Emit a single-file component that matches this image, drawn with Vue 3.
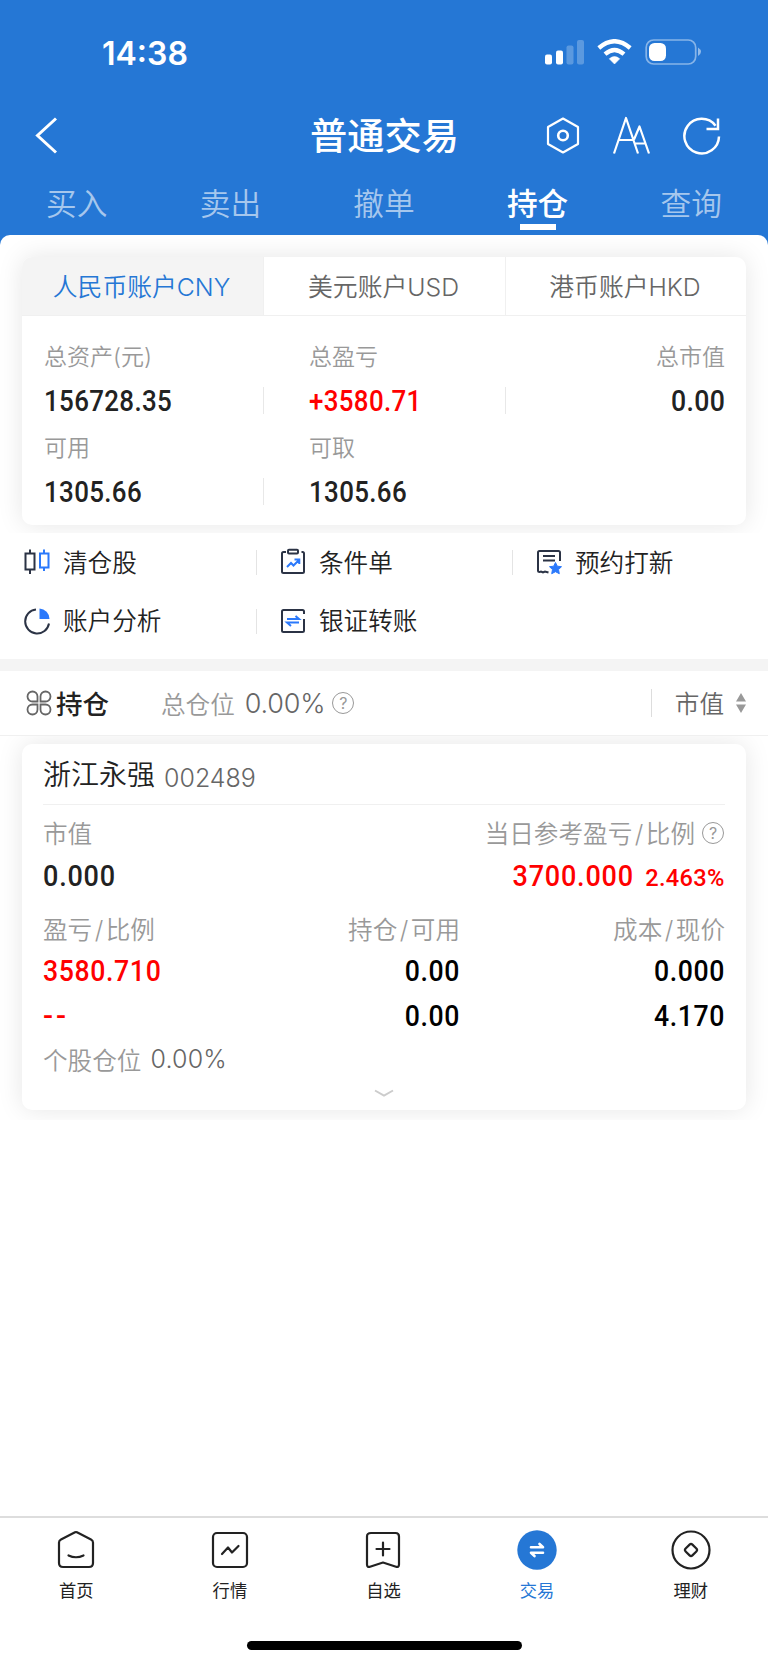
<script setup>
const tradeTabs = ['买入', '卖出', '撤单', '持仓', '查询']
const accounts = ['人民币账户CNY', '美元账户USD', '港币账户HKD']
const summary = [
  { label: '总资产(元)', value: '156728.35', split: true },
  { label: '总盈亏', value: '+3580.71', up: true, split: true },
  { label: '总市值', value: '0.00', end: true },
  { label: '可用', value: '1305.66', split: true },
  { label: '可取', value: '1305.66' },
]
const tools = [
  { name: '清仓股', icon: 'candles', split: true },
  { name: '条件单', icon: 'clipboard', split: true },
  { name: '预约打新', icon: 'note' },
  { name: '账户分析', icon: 'pie', split: true },
  { name: '银证转账', icon: 'transfer' },
]
const nav = [
  { name: '首页', icon: 'home' },
  { name: '行情', icon: 'chart' },
  { name: '自选', icon: 'mark' },
  { name: '交易', icon: 'trade' },
  { name: '理财', icon: 'wealth' },
]
</script>

<template>
  <div class="app">
    <header class="top">
      <div class="status">
        <span class="clock">14:38</span>
        <svg class="signals" width="160" height="30" viewBox="0 0 160 30">
          <g fill="#fff">
            <rect x="1" y="15.500" width="7" height="10" rx="2" />
            <rect x="12" y="11.500" width="7" height="14" rx="2" />
            <rect x="22.500" y="6.500" width="7" height="19" rx="2" opacity=".25" />
            <rect x="33" y="1" width="7" height="24.500" rx="2" opacity=".25" />
            <path d="M70.500 25 65.300 19.800Q70.500 15.400 75.700 19.800Z" stroke="#fff" stroke-width=".6" stroke-linejoin="round" />
          </g>
          <g fill="none" stroke="#fff" stroke-width="4.300">
            <path d="M54.800 9Q70.500 -4.600 86.200 9" />
            <path d="M61 15.200Q70.500 6.800 80 15.200" />
          </g>
          <rect x="102.200" y="1" width="49.500" height="24" rx="7.500" fill="none" stroke="#fff" stroke-opacity=".45" stroke-width="1.700" />
          <rect x="105" y="4" width="17" height="18" rx="5.500" fill="#fff" />
          <path d="M154 8.500Q157 10.500 157 12.700T154 17Z" fill="#fff" opacity=".5" />
        </svg>
      </div>
      <div class="titlebar">
        <svg class="back" width="24" height="38" viewBox="0 0 24 38" fill="none" stroke="#fff" stroke-width="3"><path d="M21 1.500 2.500 18.500 21 35.500" /></svg>
        <h1>普通交易</h1>
        <div class="actions">
          <svg width="36" height="40" viewBox="0 0 36 40" fill="none" stroke="#fff" stroke-width="2.200">
            <path d="M18 2.500 33 11V28L18 36.500 3 28V11Z" stroke-linejoin="round" />
            <circle cx="18" cy="19.500" r="4.800" stroke-width="2.600" />
          </svg>
          <svg width="40" height="40" viewBox="0 0 40 40" fill="none" stroke="#fff" stroke-width="2.200" stroke-linejoin="round">
            <path d="M2 37.500 14 2 26 37.500M6.500 24H22M22 23.500 27.500 10.500 37 37.500M22.500 27.500H33.500" />
          </svg>
          <svg width="40" height="40" viewBox="0 0 40 40" fill="none" stroke="#fff" stroke-width="2.500"><path d="M37 20.500A17.300 17.300 0 1 1 33.500 9.700M36 2.500V13H24.500" /></svg>
        </div>
      </div>
      <nav class="trade-tabs">
        <span v-for="(t, i) in tradeTabs" :key="t" :class="{ active: i === 3 }">{{ t }}</span>
      </nav>
    </header>

    <section class="sheet">
      <div class="card account">
        <div class="account-tabs">
          <span v-for="(a, i) in accounts" :key="a" :class="{ active: i === 0 }">{{ a }}</span>
        </div>
        <div class="summary">
          <div v-for="s in summary" :key="s.label" class="cell" :class="{ split: s.split, end: s.end }">
            <span class="label">{{ s.label }}</span>
            <span class="num" :class="{ up: s.up }">{{ s.value }}</span>
          </div>
        </div>
      </div>
    </section>

    <section class="tools">
      <div v-for="t in tools" :key="t.name" class="tool" :class="{ split: t.split }">
        <svg width="28" height="28" viewBox="0 0 28 28" fill="none" stroke="#2b3345" stroke-width="2">
          <template v-if="t.icon === 'candles'">
            <path d="M2.500 5.500H11.500V21.500H2.500ZM7 1.500V5.500M7 21.500V26" />
            <path d="M17 5.500H25.500V19.500H17ZM21 1.500V5.500M21 19.500V23" stroke="#2b79fb" />
          </template>
          <template v-else-if="t.icon === 'clipboard'">
            <path d="M7 4H4.500Q3 4 3 5.500V23.500Q3 25 4.500 25H23.500Q25 25 25 23.500V5.500Q25 4 23.500 4H22.500" />
            <rect x="9" y="1.800" width="10" height="3.700" rx="1" />
            <path d="M8 19 12 15 14.500 17.500 20 12M15.500 11.500H20.300V16" stroke="#2b79fb" />
          </template>
          <template v-else-if="t.icon === 'note'">
            <path d="M25 13V4.500Q25 3 23.500 3H4.500Q3 3 3 4.500V23Q3 24 4.500 24L6 23.500 8 24.500 10 23.500 13.500 24.500M8 8H20M8 12.500H20" />
            <path d="M20.500 14.500 22.300 18.200 26.500 18.700 23.500 21.600 24.300 25.700 20.500 23.700 16.700 25.700 17.500 21.600 14.500 18.700 18.700 18.200Z" fill="#2b79fb" stroke="#2b79fb" stroke-width="1" />
          </template>
          <template v-else-if="t.icon === 'pie'">
            <path d="M13 2.500A12 12 0 1 0 26 16.500" />
            <path d="M16.500 1.500A10.500 10.500 0 0 1 26.500 12H16.500Z" fill="#2b79fb" stroke="none" />
          </template>
          <template v-else>
            <path d="M25 7V4.500Q25 3 23.500 3H4.500Q3 3 3 4.500V23.500Q3 25 4.500 25H23.500Q25 25 25 23.500V12" />
            <path d="M8 12H20L16.500 9M20 15.500H8L12 19" stroke="#2b79fb" />
          </template>
        </svg>
        <span>{{ t.name }}</span>
      </div>
    </section>

    <section class="holdings">
      <header class="hold-head">
        <svg class="clover" width="26" height="26" viewBox="0 0 26 26" fill="none" stroke="#666" stroke-width="1.800">
          <path d="M11.500 11.500H6.500A5 5 0 1 1 11.500 6.500ZM14.500 11.500H19.500A5 5 0 1 0 14.500 6.500ZM11.500 14.500H6.500A5 5 0 1 0 11.500 19.500ZM14.500 14.500H19.500A5 5 0 1 1 14.500 19.500Z" />
        </svg>
        <h2>持仓</h2>
        <span class="total">总仓位</span>
        <span class="percent">0.00%</span>
        <i class="help">?</i>
        <div class="sort">
          <span>市值</span>
          <svg width="10" height="20" viewBox="0 0 10 20" fill="#999"><path d="M5 0 10 8.500H0ZM0 11.500H10L5 20Z" /></svg>
        </div>
      </header>

      <div class="stage">
        <article class="card stock">
          <div class="stock-name"><span>浙江永强</span><span class="code">002489</span></div>
          <div class="row">
            <span class="label">市值</span>
            <span class="label push"><span>当日参考盈亏<b>/</b>比例</span><i class="help">?</i></span>
          </div>
          <div class="row values">
            <span class="num">0.000</span>
            <span class="num up push">3700.000</span>
            <span class="num up small">2.463%</span>
          </div>
          <div class="trio labels">
            <span>盈亏<b>/</b>比例</span><span>持仓<b>/</b>可用</span><span>成本<b>/</b>现价</span>
          </div>
          <div class="trio">
            <span class="num up">3580.710</span><span class="num">0.00</span><span class="num">0.000</span>
          </div>
          <div class="trio">
            <span class="num up dash">--</span><span class="num">0.00</span><span class="num">4.170</span>
          </div>
          <div class="ratio"><span>个股仓位</span><span class="figure">0.00%</span></div>
          <svg class="more" width="20" height="9" viewBox="0 0 20 9" fill="none" stroke="#ccc" stroke-width="2"><path d="M1 1.500 10 6.500 19 1.500" /></svg>
        </article>
      </div>
    </section>

    <footer class="bottom">
      <nav class="nav">
        <div v-for="n in nav" :key="n.name" class="nav-item" :class="{ active: n.icon === 'trade' }">
          <svg width="40" height="40" viewBox="0 0 40 40" fill="none" stroke="#222" stroke-width="2.200" stroke-linecap="round" stroke-linejoin="round">
            <template v-if="n.icon === 'home'">
              <path d="M19 2.300Q20 1.800 21 2.300L35 9.500Q37 10.500 37 12.500V33Q37 37 33 37H7Q3 37 3 33V12.500Q3 10.500 5 9.500Z" /><path d="M12.500 25.500Q20 29 27.500 25.500" />
            </template>
            <template v-else-if="n.icon === 'chart'">
              <rect x="3" y="3" width="34" height="34" rx="4" /><path d="M12 24 18 17.500 22 22.500 28.500 16" />
            </template>
            <template v-else-if="n.icon === 'mark'">
              <path d="M8 3H32.500Q36 3 36 6.500V34.500Q36 37.500 33 36.700L20 32.500 7 36.700Q4 37.500 4 34.500V6.500Q4 3 8 3Z" /><path d="M20 12.500V25.500M13.500 19H26.500" />
            </template>
            <template v-else-if="n.icon === 'trade'">
              <circle cx="20" cy="20" r="19.700" fill="#2577d5" stroke="none" />
              <path d="M14 17.300H26L22.500 14M26 22.800H14L17.500 26" stroke="#fff" stroke-width="2.600" />
            </template>
            <template v-else>
              <circle cx="20" cy="20" r="18.500" /><rect x="15.200" y="15.200" width="9.600" height="9.600" rx="2" transform="rotate(45 20 20)" />
            </template>
          </svg>
          <span>{{ n.name }}</span>
        </div>
      </nav>
      <div class="indicator"></div>
    </footer>
  </div>
</template>

<style>
body { margin: 0; background: #fff; }
</style>

<style scoped>
* { box-sizing: border-box; }
svg { display: block; flex: none; }
h1, h2 { margin: 0; font-weight: 500; }
.app { width: 768px; height: 1665px; display: flex; flex-direction: column; background: #fff; color: #222; font-family: Inter, "Noto Sans CJK SC", sans-serif; font-size: 24.600px; font-weight: 350; overflow: hidden; white-space: nowrap; }
.top { height: 235px; background: #2577d5; color: #fff; }
.status { height: 100px; padding: 39px 64px 0 102px; display: flex; justify-content: space-between; align-items: flex-start; }
.clock { font-size: 32px; line-height: 29px; font-weight: 600; }
.titlebar { height: 72px; padding: 0 46px 0 35px; display: grid; grid-template-columns: 200px 1fr 200px; align-items: center; }
h1 { font-size: 37.200px; line-height: 70px; text-align: center; padding: 2px 0 0 12px; }
.actions { display: flex; align-items: center; justify-content: flex-end; gap: 30px; }
.actions svg + svg { margin-left: 1.500px; }
.actions svg:last-child { margin-left: 0; }
.trade-tabs { display: grid; grid-template-columns: repeat(5, 1fr); height: 63px; font-size: 30.700px; line-height: 64px; text-align: center; }
.trade-tabs span { color: rgba(255, 255, 255, .6); position: relative; }
.trade-tabs .active { color: #fff; font-weight: 500; }
.trade-tabs .active::after { content: ""; position: absolute; left: calc(50% - 18px); top: 52px; width: 36px; height: 6px; background: #fff; }
.sheet { height: 298px; padding: 22px; background: linear-gradient(#2577d5 12px, #fff 12px); position: relative; overflow: hidden; }
.sheet::before { content: ""; position: absolute; inset: 0; background: #fff; border-radius: 10px 10px 0 0; }
.card { position: relative; background: #fff; border-radius: 10px; box-shadow: 0 0 26px rgba(0, 0, 0, .1); }
.account { height: 268px; }
.account-tabs { display: grid; grid-template-columns: 241px 242px 241px; height: 59px; border-bottom: 1px solid #f0f0f0; line-height: 60px; text-align: center; color: #666; border-radius: 10px 10px 0 0; overflow: hidden; font-size: 24.800px; }
.account-tabs span { padding-right: 2px; }
.account-tabs span + span { border-left: 1px solid #f0f0f0; }
.account-tabs .active { color: #2577d5; background: #f4f4f4; }
.summary { display: grid; grid-template-columns: 242px 242px 240px; grid-auto-rows: 91px; padding-top: 19px; }
.cell { position: relative; padding-left: 22px; display: flex; flex-direction: column; align-items: flex-start; }
.cell:nth-child(3n + 2) { padding-left: 45px; }
.cell.end { align-items: flex-end; padding: 0 21px 0 0; }
.cell .label { font-size: 23px; line-height: 45px; height: 44px; }
.cell.split::after { content: ""; position: absolute; right: 0; top: 52px; width: 1px; height: 27px; background: #e8e8e8; }
.label { color: #999; }
.num { font-family: Roboto, sans-serif; font-size: 29.600px; line-height: 44px; font-weight: 500; letter-spacing: .4px; transform: scaleX(.9); transform-origin: left center; }
.cell .num { transform: scaleX(.875); }
.cell.end .num { transform: scaleX(.9); }
.end .num, .push, .num.small, .trio .num:nth-child(n + 2) { transform-origin: right center; }
.up { color: #f00; }
.tools { height: 126px; display: grid; grid-template-columns: repeat(3, 256px); grid-auto-rows: 58.500px; }
.tool { display: flex; align-items: center; padding-left: 23px; gap: 12px; position: relative; }
.tool span { padding-bottom: 3px; }
.tool.split::after { content: ""; position: absolute; right: -1px; top: 17px; width: 1px; height: 25px; background: #e4e4e4; }
.holdings { border-top: 12px solid #f4f4f4; }
.hold-head { height: 65px; border-bottom: 1px solid #f0f0f0; display: flex; align-items: center; padding: 0 22px 0 26px; }
h2 { font-size: 26.500px; margin-left: 4px; padding-bottom: 2px; }
.total { color: #999; margin-left: 52px; padding-bottom: 1px; }
.percent { font-size: 27px; color: #666; margin-left: 10px; letter-spacing: -.2px; }
.help { display: inline-block; width: 22px; height: 22px; border: 1.500px solid #999; border-radius: 50%; font: 400 16px/20px Inter, sans-serif; text-align: center; color: #999; }
.percent + .help { margin-left: 7px; }
.sort { display: flex; align-items: center; margin-left: auto; height: 28px; border-left: 1px solid #ddd; padding-left: 23px; gap: 12px; color: #666; }
.sort span { padding-bottom: 2px; }
.stage { height: 384px; padding: 8px 22px; overflow: hidden; }
.stock { height: 366px; padding: 0 21px 0 21px; }
.stock-name { height: 61px; display: flex; align-items: baseline; border-bottom: 1px solid #f0f0f0; font-size: 28px; line-height: 63px; }
.code { font-size: 25px; color: #666; margin-left: 9px; position: relative; top: 2px; }
b { font-weight: inherit; margin: 0 2.500px; }
.row { display: flex; height: 56px; align-items: center; }
.row .label { line-height: 58px; padding-top: 2px; display: flex; align-items: center; gap: 7px; }
.row .help { margin-bottom: 2px; margin-right: 1px; }
.push { margin-left: auto; }
.row.values { height: 31px; }
.row.values .num { font-size: 30px; letter-spacing: .9px; line-height: 30px; padding-bottom: 2px; }
.row.values .num.small { font-size: 24.600px; letter-spacing: .3px; margin-left: 8.500px; padding: 3px 0 0; transform: scaleX(.96); }
.trio { display: grid; grid-template-columns: 180px 237px 265px; text-align: right; align-items: center; height: 45px; color: #000; }
.trio span:first-child { text-align: left; }
.trio.labels { height: 57px; padding-top: 15px; color: #999; }
.trio.labels span { line-height: 50px; margin-top: -2px; }
.trio .num:nth-child(n + 2) { letter-spacing: .7px; }
.trio .num.up { letter-spacing: .7px; }
.trio .num.dash { letter-spacing: 3px; transform: none; }
.trio .num { line-height: 45px; }
.ratio { height: 40px; display: flex; align-items: center; color: #999; }
.figure { font-size: 25px; color: #666; margin-left: 9px; letter-spacing: .2px; }
.more { margin: 10px auto 0; }
.bottom { margin-top: auto; height: 149px; border-top: 2px solid #ddd; }
.nav { display: grid; grid-template-columns: repeat(5, 1fr); padding-top: 12px; }
.nav-item { display: flex; flex-direction: column; align-items: center; font-size: 17.300px; line-height: 26px; gap: 8px; font-weight: 400; margin-left: -1px; }
.nav-item.active { color: #2577d5; }
.indicator { width: 275px; height: 9px; border-radius: 5px; background: #000; margin: 37px auto 0; }
</style>
